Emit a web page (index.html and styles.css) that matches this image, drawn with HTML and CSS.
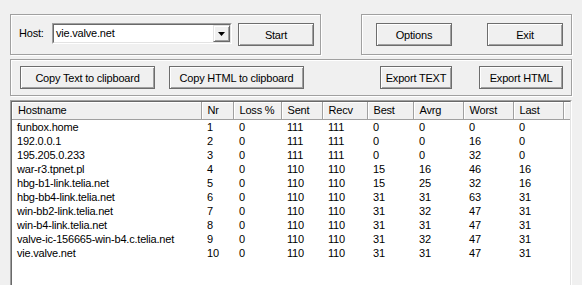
FILE: index.html
```html
<!DOCTYPE html>
<html>
<head>
    <title>WinMTR</title>
    <link rel="stylesheet" href="styles.css">
</head>
<body>
    <div class="window">
        <div class="top-row">
            <div class="group host-group">
                <span class="label">Host:</span>
                <div class="combo">
                    <div class="combo-inner">
                        <span class="combo-text">vie.valve.net</span>
                        <span class="combo-btn">
                            <svg width="7" height="4" viewBox="0 0 7 4"><path d="M0 0h7L3.5 4z" fill="#000"/></svg>
                        </span>
                    </div>
                </div>
                <button class="btn start-btn">Start</button>
            </div>
            <div class="group app-group">
                <button class="btn app-btn">Options</button>
                <button class="btn app-btn">Exit</button>
            </div>
        </div>
        <div class="group export-group">
            <button class="btn copy-btn">Copy Text to clipboard</button>
            <button class="btn copy-btn">Copy HTML to clipboard</button>
            <button class="btn export-text-btn">Export TEXT</button>
            <button class="btn export-html-btn">Export HTML</button>
        </div>
        <div class="list">
            <div class="list-inner">
                <table class="trace">
                    <colgroup>
                        <col style="width: 189px">
                        <col style="width: 32px">
                        <col style="width: 48px">
                        <col style="width: 41px">
                        <col style="width: 45px">
                        <col style="width: 46px">
                        <col style="width: 50px">
                        <col style="width: 50px">
                        <col style="width: 50px">
                        <col>
                    </colgroup>
                    <thead>
                        <tr>
                            <th>Hostname</th>
                            <th>Nr</th>
                            <th>Loss %</th>
                            <th>Sent</th>
                            <th>Recv</th>
                            <th>Best</th>
                            <th>Avrg</th>
                            <th>Worst</th>
                            <th>Last</th>
                            <th class="filler"></th>
                        </tr>
                    </thead>
                    <tbody id="hops"></tbody>
                </table>
            </div>
        </div>
    </div>

    <script>
        const hops = [
            ['funbox.home', 1, 0, 111, 111, 0, 0, 0, 0],
            ['192.0.0.1', 2, 0, 111, 111, 0, 0, 16, 0],
            ['195.205.0.233', 3, 0, 111, 111, 0, 0, 32, 0],
            ['war-r3.tpnet.pl', 4, 0, 110, 110, 15, 16, 46, 16],
            ['hbg-b1-link.telia.net', 5, 0, 110, 110, 15, 25, 32, 16],
            ['hbg-bb4-link.telia.net', 6, 0, 110, 110, 31, 31, 63, 31],
            ['win-bb2-link.telia.net', 7, 0, 110, 110, 31, 32, 47, 31],
            ['win-b4-link.telia.net', 8, 0, 110, 110, 31, 31, 47, 31],
            ['valve-ic-156665-win-b4.c.telia.net', 9, 0, 110, 110, 31, 32, 47, 31],
            ['vie.valve.net', 10, 0, 110, 110, 31, 31, 47, 31]
        ];

        const body = document.getElementById('hops');
        hops.forEach(hop => {
            const tr = document.createElement('tr');
            hop.forEach(val => {
                const td = document.createElement('td');
                td.textContent = val;
                tr.appendChild(td);
            });
            tr.appendChild(document.createElement('td'));
            body.appendChild(tr);
        });
    </script>
</body>
</html>
```

FILE: styles.css
```css
* {
    box-sizing: border-box;
}
body {
    margin: 0;
    background: #f0f0f0;
    font-family: "Liberation Sans", Arial, sans-serif;
    font-size: 11px;
    letter-spacing: -0.2px;
    color: #000;
    overflow: hidden;
}
.window {
    padding: 14px 10px 0 10px;
    height: 285px;
}
.top-row {
    display: flex;
    justify-content: space-between;
}
.group {
    display: flex;
    align-items: flex-start;
    border: 1px solid #a0a0a0;
    box-shadow: inset 1px 1px #fff, 1px 1px #fff;
}
.btn {
    height: 23px;
    padding: 0;
    font-family: inherit;
    font-size: 11px;
    letter-spacing: -0.2px;
    color: #000;
    background: #f0f0f0;
    border: 1px solid #6d6d6d;
    box-shadow: inset 1px 1px #fff, inset -1px -1px #a0a0a0;
}
.host-group {
    width: 311px;
    height: 41px;
    padding: 8px 0 0 8px;
}
.label {
    width: 33px;
    line-height: 21px;
}
.combo {
    width: 180px;
    height: 21px;
    border: 1px solid;
    border-color: #a0a0a0 #fff #fff #a0a0a0;
}
.combo-inner {
    display: flex;
    height: 100%;
    background: #fff;
    border: 1px solid;
    border-color: #696969 #e3e3e3 #e3e3e3 #696969;
}
.combo-text {
    flex: 1;
    padding-left: 2px;
    line-height: 17px;
}
.combo-btn {
    display: flex;
    align-items: center;
    justify-content: center;
    width: 17px;
    height: 17px;
    background: #f0f0f0;
    border: 1px solid;
    border-color: #e3e3e3 #696969 #696969 #e3e3e3;
    box-shadow: inset 1px 1px #fff, inset -1px -1px #a0a0a0;
}
.start-btn {
    width: 76px;
    margin-left: 6px;
}
.app-group {
    width: 211px;
    height: 41px;
    padding: 8px 0 0 14px;
    gap: 35px;
}
.app-btn {
    width: 76px;
}
.export-group {
    margin-top: 4px;
    height: 37px;
    padding: 6px 8px 0 9px;
}
.copy-btn {
    width: 135px;
    margin-right: 14px;
}
.export-text-btn {
    width: 72px;
    margin-left: auto;
    margin-right: 27px;
}
.export-html-btn {
    width: 84px;
}
.list {
    margin-top: 4px;
    height: 200px;
    border: 1px solid;
    border-color: #a0a0a0 #fff #fff #a0a0a0;
}
.list-inner {
    height: 100%;
    background: #fff;
    border: 1px solid;
    border-color: #696969 #e3e3e3 #e3e3e3 #696969;
}
.trace {
    width: 100%;
    table-layout: fixed;
    border-collapse: collapse;
}
.trace th {
    height: 17px;
    padding: 0 0 0 6px;
    text-align: left;
    font-weight: normal;
    white-space: nowrap;
    background: #f0f0f0;
    border-right: 1px solid #a0a0a0;
    border-bottom: 1px solid #a0a0a0;
    box-shadow: inset 1px 1px #fff;
}
.trace th.filler {
    border-right: none;
}
.trace td {
    height: 14px;
    padding: 0 0 0 6px;
    line-height: 14px;
    white-space: nowrap;
    overflow: hidden;
}
.trace td:first-child {
    padding-left: 5px;
}
```
